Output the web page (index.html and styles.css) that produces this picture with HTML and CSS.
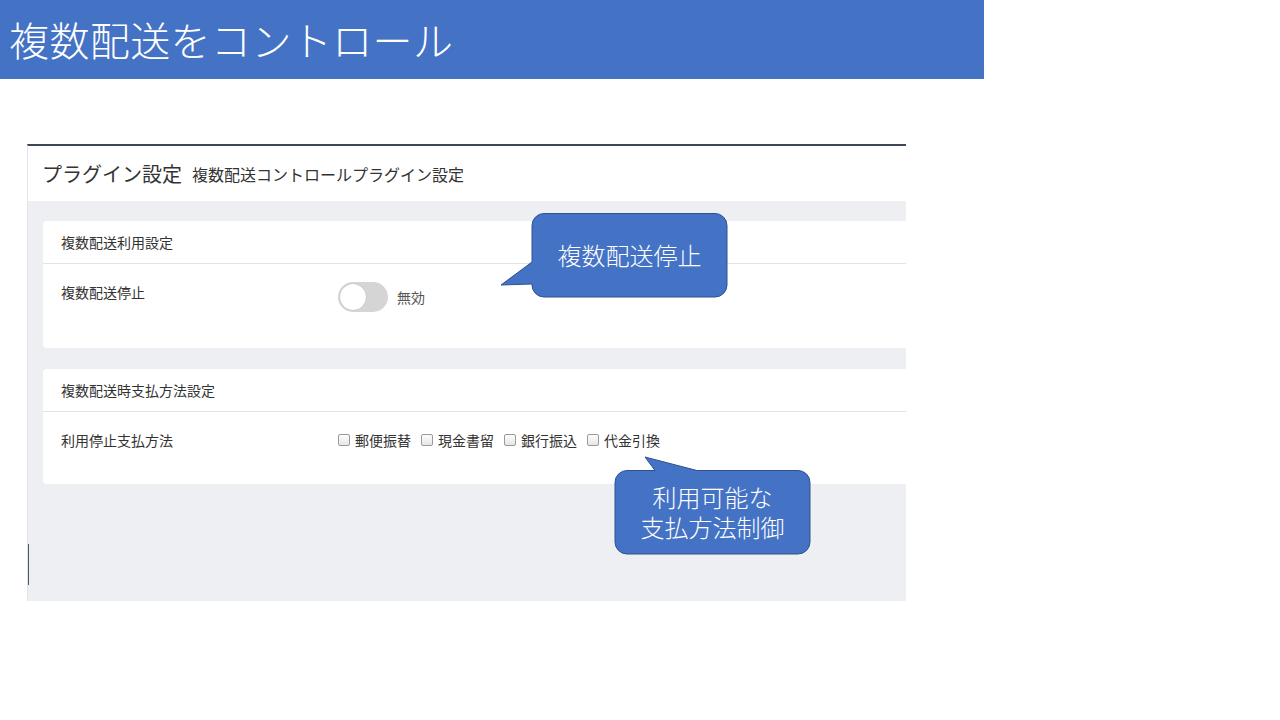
FILE: index.html
```html
<!DOCTYPE html>
<html lang="ja">
<head>
    <meta charset="UTF-8">
    <meta name="viewport" content="width=device-width, initial-scale=1.0">
    <title>複数配送をコントロール</title>
    <link rel="stylesheet" href="styles.css">
</head>
<body>
    <div class="banner">複数配送をコントロール</div>

    <div class="shot">
        <div class="shot-head">
            <span class="shot-title">プラグイン設定</span>
            <span class="shot-sub">複数配送コントロールプラグイン設定</span>
        </div>
        <div class="shot-body">
            <div class="card">
                <div class="card-head">複数配送利用設定</div>
                <div class="card-body card-body-tall">
                    <div class="row">
                        <div class="row-label">複数配送停止</div>
                        <div class="row-value">
                            <span class="toggle"><span class="knob"></span></span>
                            <span class="toggle-text">無効</span>
                        </div>
                    </div>
                </div>
            </div>
            <div class="card">
                <div class="card-head">複数配送時支払方法設定</div>
                <div class="card-body">
                    <div class="row">
                        <div class="row-label">利用停止支払方法</div>
                        <div class="row-value checks">
                            <label class="check"><span class="box"></span>郵便振替</label>
                            <label class="check"><span class="box"></span>現金書留</label>
                            <label class="check"><span class="box"></span>銀行振込</label>
                            <label class="check"><span class="box"></span>代金引換</label>
                        </div>
                    </div>
                </div>
            </div>
        </div>
        <span class="shot-mark"></span>
    </div>

    <!-- callouts over the screenshot -->
    <div class="callout callout-stop">
        <svg width="232" height="90" viewBox="0 0 232 90">
            <path d="M46 3.5 H217 A12 12 0 0 1 229 15.5 V75 A12 12 0 0 1 217 87 H46 A12 12 0 0 1 34 75 V74 L3 75 L34 52 V15.5 A12 12 0 0 1 46 3.5 Z" fill="#4472c4" stroke="#2f528f" stroke-width="1"/>
        </svg>
        <div class="callout-text">複数配送停止</div>
    </div>
    <div class="callout callout-pay">
        <svg width="202" height="104" viewBox="0 0 202 104">
            <path d="M15 16.5 H43 L33 3 L85 16.5 H186 A12 12 0 0 1 198 28.5 V88 A12 12 0 0 1 186 100 H15 A12 12 0 0 1 3 88 V28.5 A12 12 0 0 1 15 16.5 Z" fill="#4472c4" stroke="#2f528f" stroke-width="1"/>
        </svg>
        <div class="callout-text">
            <div class="callout-line">利用可能な</div>
            <div class="callout-line">支払方法制御</div>
        </div>
    </div>
</body>
</html>
```

FILE: styles.css
```css
html, body {
    margin: 0;
    height: 100%;
    background-color: #fff;
    font-family: "Noto Sans CJK JP", "Noto Sans", sans-serif;
    color: #333;
}

body {
    position: relative;
}

.banner {
    width: 984px;
    height: 79px;
    background-color: #4472c4;
    color: #fff;
    font-size: 40px;
    font-weight: 300;
    line-height: 79px;
    padding-left: 9px;
    box-sizing: border-box;
    letter-spacing: 0.4px;
}

.shot {
    position: relative;
    margin: 65px 0 0 27px;
    width: 879px;
    height: 457px;
    border-top: 2px solid #3b4657;
    border-left: 1px solid #e3e5ea;
    box-sizing: border-box;
    overflow: hidden;
    display: flex;
    flex-direction: column;
}

.shot-mark {
    position: absolute;
    left: -1px;
    top: 398px;
    width: 2px;
    height: 41px;
    background-color: #4a5566;
}

.shot-head {
    height: 55px;
    flex-shrink: 0;
    display: flex;
    align-items: center;
    padding-left: 14px;
    background-color: #fff;
}

.shot-title {
    font-size: 20px;
    margin-right: 10px;
}

.shot-sub {
    font-size: 16px;
}

.shot-body {
    flex-grow: 1;
    background-color: #eeeff3;
    padding: 20px 0 0 15px;
    display: flex;
    flex-direction: column;
    gap: 21px;
}

.card {
    width: 900px;
    background-color: #fff;
    border-radius: 4px;
}

.card-head {
    height: 42px;
    line-height: 43px;
    padding-left: 18px;
    font-size: 14px;
    border-bottom: 1px solid #e3e3e3;
}

.card-body {
    padding: 18px 18px 34px;
}

.card-body-tall {
    padding: 18px 18px 36px;
}

.row {
    display: flex;
    align-items: flex-start;
}

.row-label {
    width: 277px;
    font-size: 14px;
    line-height: 20px;
}

.row-value {
    display: flex;
    align-items: center;
}

.toggle {
    position: relative;
    width: 50px;
    height: 30px;
    border-radius: 15px;
    background-color: #d5d5d5;
}

.knob {
    position: absolute;
    left: 2px;
    top: 2px;
    width: 26px;
    height: 26px;
    border-radius: 50%;
    background-color: #fff;
    box-shadow: 0 0 1px rgba(0, 0, 0, 0.3);
}

.toggle-text {
    margin-left: 9px;
    font-size: 14px;
    color: #555;
}

.checks {
    gap: 10px;
    line-height: 20px;
}

.check {
    display: flex;
    align-items: center;
    font-size: 14px;
    color: #333;
}

.box {
    width: 10px;
    height: 10px;
    margin-right: 5px;
    border: 1px solid #9a9a9a;
    border-radius: 2px;
    background: linear-gradient(#fdfdfd, #e6e6e6);
}

.callout {
    position: absolute;
}

.callout svg {
    display: block;
}

.callout-text {
    position: absolute;
    color: #fff;
    font-size: 24px;
    font-weight: 300;
    text-align: center;
    display: flex;
    flex-direction: column;
    align-items: center;
    justify-content: center;
}

.callout-line {
    line-height: 30px;
    height: 30px;
}

.callout-stop {
    left: 498px;
    top: 210px;
}

.callout-stop .callout-text {
    left: 34px;
    top: 3px;
    width: 195px;
    height: 82px;
}

.callout-pay {
    left: 612px;
    top: 454px;
}

.callout-pay .callout-text {
    left: 3px;
    top: 16px;
    width: 195px;
    height: 84px;
}
```
